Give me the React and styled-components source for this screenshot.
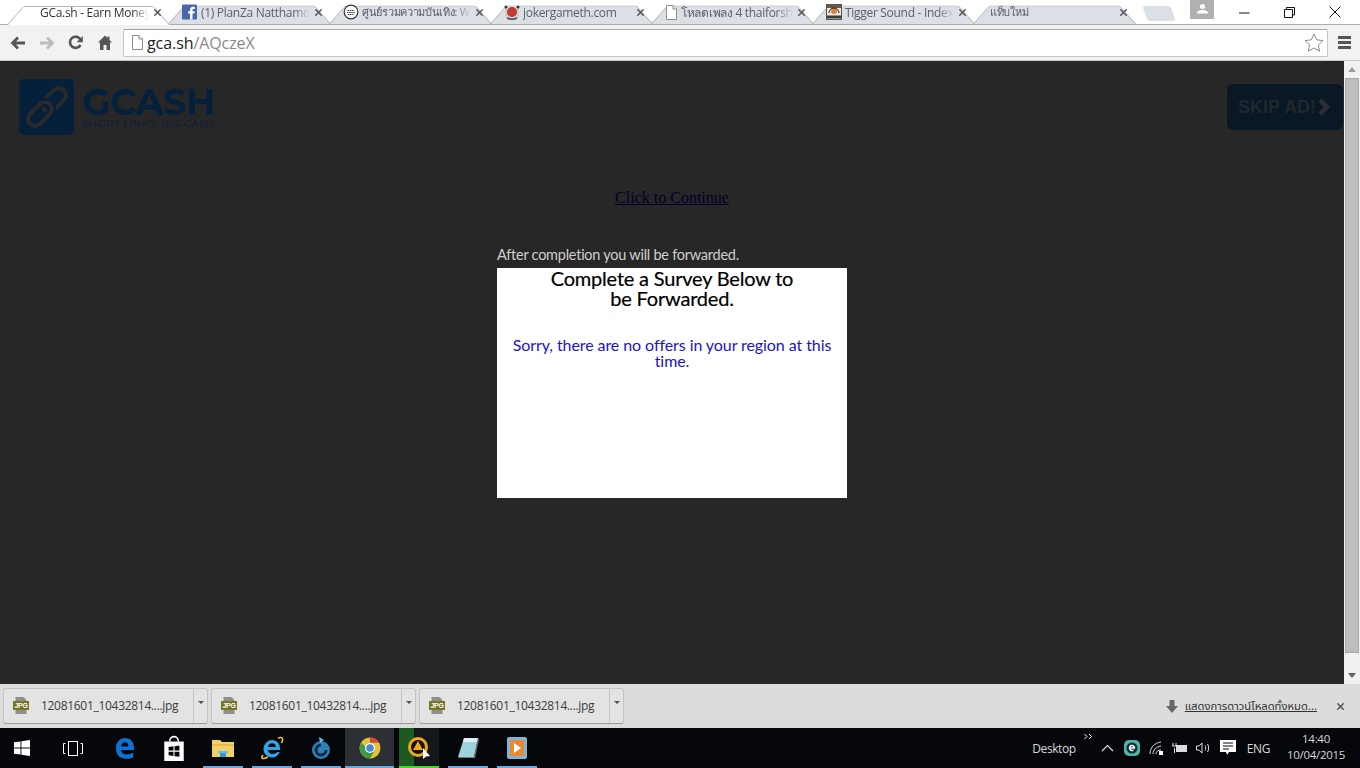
import React from "react"
import styled, { createGlobalStyle } from "styled-components"
import { X } from "lucide-react"

const Global = createGlobalStyle`
  html, body {
    margin: 0;
    padding: 0;
    height: 768px;
    overflow: hidden;
    background: #272727;
  }
  * { box-sizing: border-box; }
`

const Screen = styled.div`
  width: 1360px;
  height: 768px;
  display: flex;
  flex-direction: column;
  font-family: "Open Sans", "Noto Sans", "DejaVu Sans", sans-serif;
  overflow: hidden;
`

/* window title + tabs */
const TabStrip = styled.div`
  height: 25px;
  background: #fff;
  display: flex;
  align-items: flex-end;
  padding-left: 10px;
  border-bottom: 1px solid #a9acb1;
  position: relative;
`

const Tab = styled.div`
  position: relative;
  width: 161px;
  height: 24px;
  flex: none;
  display: flex;
  align-items: center;
  padding: 0 8px 0 ${(p) => p.$pad}px;
  gap: 3px;
  font-size: 12px;
  letter-spacing: -0.3px;
  color: ${(p) => (p.$active ? "#333" : "#5c5f63")};
  z-index: ${(p) => (p.$active ? 2 : 1)};
  &::before {
    content: "";
    position: absolute;
    left: -3px;
    right: 1px;
    top: 0;
    bottom: ${(p) => (p.$active ? "-1px" : "0")};
    background: ${(p) => (p.$active ? "#fff" : "#dbdfe6")};
    border: 1px solid #a9acb1;
    border-bottom: 0;
    border-radius: 3px 3px 0 0;
    transform: perspective(30px) rotateX(18deg);
    transform-origin: bottom;
    z-index: -1;
  }
`

const TabTitle = styled.span`
  flex: 1;
  white-space: nowrap;
  overflow: hidden;
  font-size: ${(p) => (p.$small ? "11px" : "12px")};
  -webkit-mask-image: linear-gradient(90deg, #000 85%, transparent);
  mask-image: linear-gradient(90deg, #000 85%, transparent);
`

const TabClose = styled(X)`
  flex: none;
  width: 11px;
  height: 11px;
  color: #55585c;
  stroke-width: 3.2;
`

const NewTab = styled.div`
  width: 28px;
  height: 15px;
  margin: 0 0 3px 8px;
  background: #dbdfe6;
  border-radius: 3px;
  transform: skewX(20deg);
  flex: none;
`

const WindowControls = styled.div`
  position: absolute;
  top: 0;
  right: 3px;
  height: 24px;
  display: flex;
  align-items: flex-start;
`

const Avatar = styled.div`
  width: 24px;
  height: 19px;
  margin-right: 8px;
  background: #b0b0b0;
  display: flex;
  justify-content: center;
  align-items: center;
  padding-bottom: 2px;
`

const WinBtn = styled.div`
  width: 45px;
  height: 24px;
  display: flex;
  align-items: center;
  justify-content: center;
`

/* toolbar */
const Toolbar = styled.div`
  height: 36px;
  background: #f2f2f2;
  display: flex;
  align-items: center;
  border-bottom: 1px solid #c9c9c9;
`

const NavBtn = styled.div`
  width: 29px;
  height: 30px;
  display: flex;
  align-items: center;
  justify-content: center;
  flex: none;
`

const NavGroup = styled.div`
  display: flex;
  padding-left: 3px;
  width: 123px;
  flex: none;
`

const Omnibox = styled.div`
  width: 1205px;
  height: 28px;
  flex: none;
  background: #fff;
  border: 1px solid #c6c6c6;
  border-top-color: #a4a4a4;
  border-radius: 2px;
  display: flex;
  align-items: center;
  padding: 0 3px 0 7px;
  gap: 3px;
`

const Url = styled.span`
  flex: 1;
  font-size: 16px;
  letter-spacing: -0.08px;
  color: #8a8a8a;
  b {
    font-weight: 400;
    color: #222;
  }
`

const Menu = styled.div`
  width: 32px;
  display: flex;
  flex-direction: column;
  align-items: center;
  gap: 2px;
  span {
    width: 13px;
    height: 3px;
    background: #555;
  }
`

/* page */
const Viewport = styled.div`
  flex: 1;
  display: flex;
  min-height: 0;
`

const Page = styled.div`
  flex: 1;
  background: #272727;
  display: flex;
  flex-direction: column;
  align-items: center;
`

const AdHeader = styled.header`
  width: 100%;
  height: 81px;
  padding: 18px 1px 0 19px;
  display: flex;
  justify-content: space-between;
  align-items: flex-start;
  border-bottom: 1px solid #2a2a2a;
`

const Logo = styled.div`
  display: flex;
  gap: 8px;
`

const LogoMark = styled.div`
  width: 55px;
  height: 56px;
  background: #04203a;
  border-radius: 5px;
  display: flex;
  align-items: center;
  justify-content: center;
`

const LogoText = styled.div`
  padding-top: 6px;
  color: #04203a;
  font-family: "Montserrat", "Open Sans", sans-serif;
  strong {
    display: block;
    font-size: 36.5px;
    line-height: 34px;
    font-weight: 700;
    letter-spacing: -0.4px;
  }
  small {
    display: block;
    font-size: 10px;
    line-height: 10px;
    letter-spacing: 0.46px;
    white-space: nowrap;
  }
`

const SkipAd = styled.div`
  margin-top: 5px;
  width: 116px;
  height: 46px;
  background: #0a1825;
  border-radius: 6px;
  display: flex;
  align-items: center;
  padding-left: 11px;
  gap: 1px;
  color: #20272d;
  font: 700 18px "Liberation Sans", Arial, sans-serif;
`

const ContinueLink = styled.a`
  margin-top: 47px;
  font: 16px/18px "Liberation Serif", "Times New Roman", serif;
  color: #00002a;
  text-decoration: underline;
`

const SurveyBlock = styled.div`
  width: 350px;
  margin-top: 40px;
`

const Note = styled.div`
  font: 14.5px/16px Lato, sans-serif;
  color: #cfcfcf;
  letter-spacing: -0.25px;
  margin-bottom: 5px;
  white-space: nowrap;
`

const Card = styled.div`
  height: 230px;
  background: #fff;
  padding: 0 10px;
  text-align: center;
  font-family: Lato, sans-serif;
`

const CardTitle = styled.h2`
  margin: 0 0 29px;
  font-size: 20px;
  line-height: 20px;
  font-weight: 400;
  -webkit-text-stroke: 0.2px #000;
  letter-spacing: -0.2px;
  color: #000;
  padding: 0 35px;
`

const CardMessage = styled.p`
  margin: 0;
  font-size: 16px;
  line-height: 16px;
  letter-spacing: -0.08px;
  color: #1c13c9;
`

const Scrollbar = styled.div`
  width: 16px;
  flex: none;
  background: #f1f1f1;
  display: flex;
  flex-direction: column;
  align-items: center;
  justify-content: space-between;
  padding: 6px 0 6px;
`

const ScrollThumb = styled.div`
  position: absolute;
  top: 78px;
  right: 1px;
  width: 14px;
  height: 575px;
  background: #bdbdbd;
  border: 1px solid #a8a8a8;
`

const Arrow = styled.span`
  width: 0;
  height: 0;
  border-left: 4px solid transparent;
  border-right: 4px solid transparent;
  ${(p) => (p.$down ? "border-top: 5px solid #606060;" : "border-bottom: 5px solid #a0a0a0;")}
`

/* download shelf */
const Shelf = styled.div`
  height: 44px;
  flex: none;
  background: #dcdcdc;
  display: flex;
  align-items: center;
  padding: 0 0 0 3px;
  gap: 3px;
`

const DownloadItem = styled.div`
  width: 205px;
  height: 36px;
  flex: none;
  margin-top: -1px;
  background: #e3e3e3;
  border: 1px solid #c3c3c3;
  border-bottom: 1px solid #9a9a9a;
  border-radius: 3px;
  display: flex;
  align-items: center;
`

const DownloadBody = styled.div`
  flex: 1;
  display: flex;
  align-items: center;
  padding-left: 9px;
  gap: 12px;
  font: 12px "Open Sans", sans-serif;
  letter-spacing: -0.3px;
  color: #3c3c3c;
  white-space: nowrap;
`

const DownloadMenu = styled.div`
  width: 14px;
  height: 100%;
  border-left: 1px solid #c3c3c3;
  display: flex;
  justify-content: center;
  padding-top: 12px;
  &::after {
    content: "";
    width: 0;
    height: 0;
    border-left: 3px solid transparent;
    border-right: 3px solid transparent;
    border-top: 3px solid #555;
  }
`

const ShelfRight = styled.div`
  margin-left: auto;
  display: flex;
  align-items: center;
  padding-right: 14px;
`

const ShowAll = styled.a`
  margin-left: 7px;
  font: 11.25px "Noto Sans Thai", "Noto Sans", "DejaVu Sans", sans-serif;
  color: #333;
  text-decoration: underline;
  white-space: nowrap;
`

const ShelfClose = styled(X)`
  margin-left: 18px;
  width: 11px;
  height: 11px;
  color: #555;
  stroke-width: 3.2;
`

/* taskbar */
const Taskbar = styled.div`
  height: 40px;
  flex: none;
  background: #05070a;
  display: flex;
  align-items: stretch;
  color: #d8d8d8;
  font: 12px "Open Sans", sans-serif;
`

const StartBtn = styled.div`
  width: 48px;
  padding-right: 4px;
  display: flex;
  align-items: center;
  justify-content: center;
`

const TaskIcon = styled.div`
  width: 49px;
  flex: none;
  display: flex;
  align-items: center;
  justify-content: center;
  position: relative;
  margin-right: ${(p) => p.$after || 0}px;
  background: ${(p) => p.$bg || "transparent"};
  &::after {
    content: "";
    position: absolute;
    left: ${(p) => (p.$open ? "5px" : "0")};
    right: ${(p) => (p.$open ? "4px" : "0")};
    bottom: 0;
    height: 2px;
    background: ${(p) => p.$bar || "transparent"};
  }
`

const Tray = styled.div`
  margin-left: auto;
  display: flex;
  align-items: center;
  padding-right: 11px;
`

const TrayText = styled.span`
  white-space: nowrap;
  font-size: 12px;
  letter-spacing: -0.4px;
  margin-left: ${(p) => p.$left || 0}px;
`

const Overflow = styled.svg`
  margin: 0 3px 24px 8px;
`

const TrayIcon = styled.div`
  width: 24px;
  display: flex;
  align-items: center;
  justify-content: center;
  flex: none;
`

const Clock = styled.div`
  width: 66px;
  margin: -2px 0 0 13px;
  text-align: center;
  font-size: 11.5px;
  line-height: 16px;
  letter-spacing: -0.3px;
`

const tabs = [
  { title: "GCa.sh - Earn Money", active: true, pad: 30 },
  { title: "(1) PlanZa Natthamon", icon: "fb", pad: 11 },
  { title: "ศูนย์รวมความบันเทิง: Wo", icon: "circle", small: true, pad: 11 },
  { title: "jokergameth.com", icon: "joker", pad: 11 },
  { title: "โหลดเพลง 4 thaiforshare", icon: "page", pad: 11 },
  { title: "Tigger Sound - Index", icon: "tigger", pad: 11 },
  { title: "แท็บใหม่", small: true, pad: 14 },
]

function TabIcon({ name }) {
  if (name === "fb")
    return (
      <svg width="16" height="16" viewBox="0 0 16 16">
        <rect width="15" height="15" y="0.5" rx="1" fill="#4a67a8" />
        <path d="M10.5 15.5V9.6h1.9l.3-2.3h-2.2V6c0-.7.2-1.1 1.1-1.1h1.2v-2c-.6-.1-1.2-.1-1.7-.1-1.8 0-3 1-3 3v1.5h-2v2.3h2v5.9z" fill="#fff" />
      </svg>
    )
  if (name === "circle")
    return (
      <svg width="16" height="16" viewBox="0 0 16 16">
        <circle cx="8" cy="8" r="6.8" fill="#fff" stroke="#333" strokeWidth="1.2" />
        <path d="M4 8.5h8M4.5 6.5h7M5 10.5h6" stroke="#333" strokeWidth="1" strokeDasharray="1.4 .7" />
      </svg>
    )
  if (name === "joker")
    return (
      <svg width="16" height="16" viewBox="0 0 16 16">
        <path d="M1 3l3 2 4-3 4 3 3-2v9l-3 3H4l-3-3z" fill="#c9cdd4" />
        <circle cx="8" cy="8" r="5" fill="#c23a2c" />
        <path d="M3 14c3 1.5 7 1.5 10 0" stroke="#444" strokeWidth="1.4" fill="none" />
        <circle cx="2" cy="3" r="1.5" fill="#333" />
        <circle cx="14" cy="3" r="1.5" fill="#333" />
      </svg>
    )
  if (name === "page") return <PageIcon />
  if (name === "tigger")
    return (
      <svg width="16" height="16" viewBox="0 0 16 16">
        <rect x="0.5" y="0.5" width="15" height="15" fill="#f4e8d8" stroke="#555" />
        <rect x="1" y="1" width="14" height="3" fill="#6a5a4a" />
        <circle cx="8" cy="7" r="3" fill="#d9824a" />
        <rect x="1" y="11.5" width="14" height="3" fill="#3a3a3a" />
        <path d="M3 9a5 5 0 0 1 10 0" stroke="#222" fill="none" />
      </svg>
    )
  return null
}

function PageIcon() {
  return (
    <svg width="13" height="15" viewBox="0 0 13 15">
      <path d="M1.5.5h6.5l3.5 3.5v10.500h-10z" fill="#fff" stroke="#8d8d8d" />
      <path d="M8 .5v3.500h3.500" fill="#eee" stroke="#8d8d8d" />
    </svg>
  )
}

function JpgIcon() {
  return (
    <svg width="16" height="17" viewBox="0 0 16 17">
      <path d="M2.500 0h8l3 3v14h-11z" fill="#8f8f8f" />
      <rect y="4" width="16" height="9" fill="#77761f" />
      <text x="8" y="11" textAnchor="middle" fontSize="7" fontWeight="700" fill="#fff" fontFamily="Liberation Sans">JPG</text>
    </svg>
  )
}

function Download() {
  return (
    <DownloadItem>
      <DownloadBody>
        <JpgIcon />
        12081601_10432814....jpg
      </DownloadBody>
      <DownloadMenu />
    </DownloadItem>
  )
}

const barBlue = "#6aa9de"

export default function App() {
  return (
    <Screen>
      <Global />
      <TabStrip>
        {tabs.map((t) => (
          <Tab key={t.title} $active={t.active} $pad={t.pad}>
            {t.icon && <TabIcon name={t.icon} />}
            <TabTitle $small={t.small}>{t.title}</TabTitle>
            <TabClose />
          </Tab>
        ))}
        <NewTab />
        <WindowControls>
          <Avatar>
            <svg width="11" height="10" viewBox="0 0 11 10">
              <circle cx="5.500" cy="2.600" r="2.500" fill="#fff" />
              <path d="M0 9.500c0-2.600 2.500-3.500 5.500-3.500s5.500.9 5.500 3.500z" fill="#fff" />
            </svg>
          </Avatar>
          <WinBtn>
            <svg width="11" height="11" viewBox="0 0 11 11">
              <path d="M0 6h10.500" stroke="#111" />
            </svg>
          </WinBtn>
          <WinBtn>
            <svg width="11" height="11" viewBox="0 0 11 11">
              <path d="M2.500 2.500V.5h8v7.500H8.500M.5 2.500h8v8h-8z" stroke="#111" fill="none" />
            </svg>
          </WinBtn>
          <WinBtn>
            <svg width="12" height="12" viewBox="0 0 12 12">
              <path d="M.5.5l11 11M11.500.5l-11 11" stroke="#111" />
            </svg>
          </WinBtn>
        </WindowControls>
      </TabStrip>

      <Toolbar>
        <NavGroup>
          <NavBtn>
            <svg width="16" height="14" viewBox="0 0 16 14">
              <path d="M15 7H3M8 1.500L2.500 7 8 12.500" stroke="#555" strokeWidth="2.800" fill="none" />
            </svg>
          </NavBtn>
          <NavBtn>
            <svg width="16" height="14" viewBox="0 0 16 14">
              <path d="M1 7h12M8 1.500L13.500 7 8 12.500" stroke="#bdbdbd" strokeWidth="2.800" fill="none" />
            </svg>
          </NavBtn>
          <NavBtn>
            <svg width="15" height="15" viewBox="0 0 15 15">
              <path d="M12.500 10a5.600 5.600 0 1 1 .2-5" stroke="#555" strokeWidth="2.600" fill="none" />
              <path d="M14.800 1v6.200H8.600z" fill="#555" />
            </svg>
          </NavBtn>
          <NavBtn>
            <svg width="14" height="15" viewBox="0 0 14 15">
              <path d="M7 .5L0 7.500h2V15h3.500v-5h3v5H12V7.500h2L11.500 5V1.500h-2V3z" fill="#555" />
            </svg>
          </NavBtn>
        </NavGroup>
        <Omnibox>
          <PageIcon />
          <Url>
            <b>gca.sh</b>/AQczeX
          </Url>
          <svg width="20" height="19" viewBox="0 0 20 19">
            <path d="M10 1l2.700 5.800 6.300.8-4.600 4.300 1.200 6.200L10 15l-5.600 3.100 1.200-6.200L1 7.600l6.300-.8z" fill="#fff" stroke="#8a8a8a" />
          </svg>
        </Omnibox>
        <Menu>
          <span />
          <span />
          <span />
        </Menu>
      </Toolbar>

      <Viewport>
        <Page>
          <AdHeader>
            <Logo>
              <LogoMark>
                <svg width="46" height="46" viewBox="0 0 46 46" fill="none">
                  <rect x="-14" y="-7" width="28" height="14" rx="7" transform="translate(30 16) rotate(-45)" stroke="#2a2a2a" strokeWidth="4" />
                  <rect x="-14" y="-7" width="28" height="14" rx="7" transform="translate(16 30) rotate(-45)" stroke="#04203a" strokeWidth="8" />
                  <rect x="-14" y="-7" width="28" height="14" rx="7" transform="translate(16 30) rotate(-45)" stroke="#2a2a2a" strokeWidth="4" />
                </svg>
              </LogoMark>
              <LogoText>
                <strong>GCASH</strong>
                <small>SHORT LINKS. BIG CASH</small>
              </LogoText>
            </Logo>
            <SkipAd>
              SKIP AD!
              <svg width="14" height="18" viewBox="0 0 14 18">
                <path d="M3 2l7 7-7 7" stroke="#2a2f33" strokeWidth="4.500" fill="none" />
              </svg>
            </SkipAd>
          </AdHeader>
          <ContinueLink href="#">Click to Continue</ContinueLink>
          <SurveyBlock>
            <Note>After completion you will be forwarded.</Note>
            <Card>
              <CardTitle>Complete a Survey Below to be Forwarded.</CardTitle>
              <CardMessage>Sorry, there are no offers in your region at this time.</CardMessage>
            </Card>
          </SurveyBlock>
        </Page>
        <Scrollbar>
          <Arrow />
          <ScrollThumb />
          <Arrow $down />
        </Scrollbar>
      </Viewport>

      <Shelf>
        <Download />
        <Download />
        <Download />
        <ShelfRight>
          <svg width="12" height="13" viewBox="0 0 12 13">
            <path d="M3.500 0h5v6H12l-6 7-6-7h3.500z" fill="#666" />
          </svg>
          <ShowAll href="#">แสดงการดาวน์โหลดทั้งหมด...</ShowAll>
          <ShelfClose />
        </ShelfRight>
      </Shelf>

      <Taskbar>
        <StartBtn>
          <svg width="16" height="16" viewBox="0 0 16 16">
            <path d="M0 2.300l6.500-.9v6.200H0zM7.400 1.300L16 0v7.600H7.400zM0 8.400h6.500v6.200L0 13.700zM7.400 8.400H16V16l-8.600-1.300z" fill="#fff" />
          </svg>
        </StartBtn>
        <TaskIcon $after={3}>
          <svg width="20" height="15" viewBox="0 0 20 15" fill="none" stroke="#fff">
            <rect x="5.500" y="0.500" width="9" height="14" />
            <path d="M2.500 2.500H.5v10h2M17.500 2.500h2v10h-2" />
          </svg>
        </TaskIcon>
        <TaskIcon>
          <svg width="20" height="22" viewBox="0 0 20 22">
            <path d="M10 1c5.500 0 9 4 9 10v2H6c.4 3 2.500 4.600 5.500 4.600 2.500 0 5-.8 6.700-2v4.600c-1.700 1-4.200 1.500-6.800 1.500C4.800 21.700 1 17.800 1 11.500 1 5.500 4.800 1 10 1zM6 9.500h7.500C13.400 6.800 12 5.300 10 5.300 8 5.300 6.400 6.800 6 9.500z" fill="#0a74d6" />
          </svg>
        </TaskIcon>
        <TaskIcon>
          <svg width="20" height="26" viewBox="0 0 18 24">
            <path d="M5 6c0-6 8-6 8 0" stroke="#fff" strokeWidth="1.400" fill="none" />
            <path d="M0 6h18v18H0z" fill="#fff" />
            <path d="M4 11l4.500-.6v4H4zM9.500 10.300l4.500-.6v4.700H9.500zM4 15.400h4.500v4L4 18.800zM9.500 15.400H14v4.700l-4.500-.6z" fill="#05070a" />
          </svg>
        </TaskIcon>
        <TaskIcon $bar={barBlue} $open>
          <svg width="22" height="18" viewBox="0 0 22 18">
            <path d="M0 1h8l2 2h12v15H0z" fill="#f3cf6a" />
            <path d="M0 5h22v2H0z" fill="#e7b94f" />
            <path d="M8 13h6v5H8z" fill="#2f9ad6" />
            <path d="M6 12h10v2H6z" fill="#5cc0ea" />
          </svg>
        </TaskIcon>
        <TaskIcon $bar={barBlue} $open>
          <svg width="24" height="24" viewBox="0 0 24 24">
            <path d="M12 4c5 0 8 3.700 8 8.500v1.500H8c.3 2.700 2 4 4.500 4 2 0 3.700-.8 5-2h2.300c-1.500 3.500-4 5.500-7.500 5.500-5.300 0-8.800-3.400-8.800-8.700C4 7.600 7.500 4 12 4zm-4 7h8c-.2-2.300-1.700-3.700-4-3.700S8.300 8.700 8 11z" fill="#30a5e8" />
            <path d="M3 19C.5 22 2 24 8 21M18 2c4-1.500 6 0 3.500 5" stroke="#f1c232" strokeWidth="1.600" fill="none" />
          </svg>
        </TaskIcon>
        <TaskIcon $bar={barBlue} $open>
          <svg width="20" height="24" viewBox="0 0 20 24">
            <circle cx="10" cy="14" r="9" fill="#2f7fb8" />
            <path d="M10 9a5 5 0 1 0 5 5" stroke="#0b2b44" strokeWidth="3" fill="none" />
            <path d="M8 1l5 3-4 3z" fill="#6fb6e0" />
          </svg>
        </TaskIcon>
        <TaskIcon $bg="#2c2f33" $bar={barBlue}>
          <svg width="22" height="22" viewBox="0 0 22 22">
            <circle cx="11" cy="11" r="10.500" fill="#e4c233" />
            <path d="M11 .5a10.500 10.500 0 0 1 9.100 5.300H11z" fill="#d9473a" />
            <path d="M2 5.800A10.500 10.500 0 0 0 11 21.500l4.500-7.800H11z" fill="#3c9a49" />
            <circle cx="11" cy="11" r="5" fill="#fff" />
            <circle cx="11" cy="11" r="3.800" fill="#4a87d6" />
          </svg>
        </TaskIcon>
        <TaskIcon
          $bg="linear-gradient(90deg, transparent 0 5px, #1d5a22 5px 20px, #14181a 20px 45px, transparent 45px)"
          $bar="#44d62c"
          $open
        >
          <svg width="24" height="26" viewBox="0 0 24 26">
            <circle cx="11" cy="12" r="10" fill="#f0a81c" />
            <circle cx="11" cy="12" r="7" fill="#111" />
            <path d="M11 6l5 9H6z" fill="#f0a81c" />
            <path d="M16 13v11l3-2.500 4-.5z" fill="#fff" />
          </svg>
        </TaskIcon>
        <TaskIcon $bar={barBlue} $open>
          <svg width="22" height="24" viewBox="0 0 22 24">
            <path d="M7 2h14l-4 19H1z" fill="#9ed2dc" />
            <path d="M7 2h14l-1 4H6z" fill="#dfeef2" />
            <path d="M17 21l4-19 1 1-4 19H2l-1-1z" fill="#777" />
          </svg>
        </TaskIcon>
        <TaskIcon $bar={barBlue} $open>
          <svg width="20" height="22" viewBox="0 0 20 22">
            <rect width="20" height="22" rx="2" fill="#7fb5d6" />
            <rect x="3" y="3" width="14" height="16" fill="#e88a33" />
            <path d="M7 6l7 5-7 5z" fill="#fff" />
          </svg>
        </TaskIcon>
        <Tray>
          <TrayText>Desktop</TrayText>
          <Overflow width="9" height="7" viewBox="0 0 9 7">
            <path d="M.5 1L3 3.500.5 6M5 1l2.500 2.500L5 6" stroke="#fff" fill="none" />
          </Overflow>
          <TrayIcon>
            <svg width="13" height="8" viewBox="0 0 13 8">
              <path d="M1 7l5.500-5.500L12 7" stroke="#ddd" fill="none" strokeWidth="1.200" />
            </svg>
          </TrayIcon>
          <TrayIcon>
            <svg width="16" height="16" viewBox="0 0 16 16">
              <rect width="16" height="16" rx="5" fill="#4fb3ab" />
              <circle cx="8" cy="8" r="5.500" fill="#0c2a33" />
              <path d="M5.500 8h5a2.500 2.500 0 1 0-1 2" stroke="#fff" strokeWidth="1.500" fill="none" />
            </svg>
          </TrayIcon>
          <TrayIcon>
            <svg width="14" height="14" viewBox="0 0 14 14" fill="none" stroke="#ddd">
              <path d="M1 13C1 7 5 2 12 1M4 13c0-4 3-7 8-8M7 13c0-2 1.500-4 5-4" />
              <rect x="10" y="10" width="4" height="4" fill="#fff" stroke="none" />
            </svg>
          </TrayIcon>
          <TrayIcon>
            <svg width="16" height="12" viewBox="0 0 16 12">
              <rect x="4.500" y="3.500" width="10" height="6" stroke="#ddd" fill="#ddd" />
              <path d="M1 1v3M4 1v3M0 4h5M2.500 6v5" stroke="#ddd" />
            </svg>
          </TrayIcon>
          <TrayIcon>
            <svg width="15" height="12" viewBox="0 0 15 12" fill="none" stroke="#ddd">
              <path d="M.5 4h2.500L6 1v10L3 8H.5zM9 3.500c1 1.500 1 3.500 0 5M11.500 2c1.500 2.500 1.500 5.500 0 8" />
            </svg>
          </TrayIcon>
          <TrayIcon>
            <svg width="16" height="16" viewBox="0 0 16 16">
              <path d="M0 0h16v12H9l-2 3-1-3H0z" fill="#fff" />
              <path d="M3 3h10M3 6h10M3 9h6" stroke="#05070a" />
            </svg>
          </TrayIcon>
          <TrayText $left={7}>ENG</TrayText>
          <Clock>
            14:40
            <br />
            10/04/2015
          </Clock>
        </Tray>
      </Taskbar>
    </Screen>
  )
}
